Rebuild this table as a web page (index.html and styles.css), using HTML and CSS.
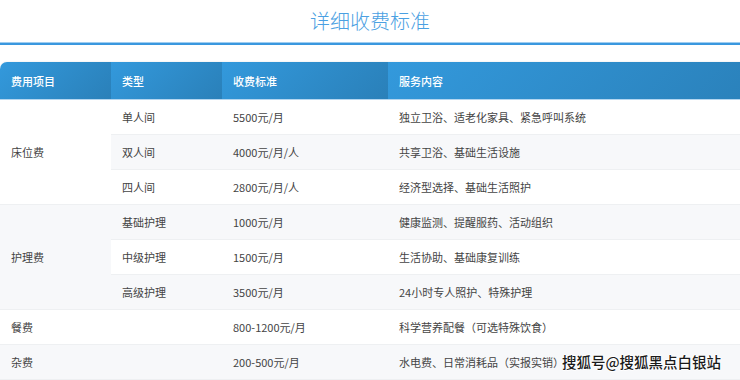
FILE: index.html
```html
<!DOCTYPE html>
<html lang="zh">
<head>
<meta charset="utf-8">
<link rel="stylesheet" href="styles.css">
</head>
<body>
<div class="page">
  <h2 class="title">详细收费标准</h2>
  <table class="fees">
    <colgroup>
      <col class="c1"><col class="c2"><col class="c3"><col class="c4">
    </colgroup>
    <thead>
      <tr><th>费用项目</th><th>类型</th><th>收费标准</th><th>服务内容</th></tr>
    </thead>
    <tbody>
      <tr><td rowspan="3" class="group">床位费</td><td>单人间</td><td>5500元/月</td><td>独立卫浴、适老化家具、紧急呼叫系统</td></tr>
      <tr><td>双人间</td><td>4000元/月/人</td><td>共享卫浴、基础生活设施</td></tr>
      <tr><td>四人间</td><td>2800元/月/人</td><td>经济型选择、基础生活照护</td></tr>
      <tr><td rowspan="3" class="group">护理费</td><td>基础护理</td><td>1000元/月</td><td>健康监测、提醒服药、活动组织</td></tr>
      <tr><td>中级护理</td><td>1500元/月</td><td>生活协助、基础康复训练</td></tr>
      <tr><td>高级护理</td><td>3500元/月</td><td>24小时专人照护、特殊护理</td></tr>
      <tr><td>餐费</td><td></td><td>800-1200元/月</td><td>科学营养配餐（可选特殊饮食）</td></tr>
      <tr><td>杂费</td><td></td><td>200-500元/月</td><td>水电费、日常消耗品（实报实销）</td></tr>
    </tbody>
  </table>
  <div class="watermark">搜狐号@搜狐黑点白银站</div>
</div>
</body>
</html>
```
FILE: styles.css
```css
html, body {
  margin: 0;
  padding: 0;
  background: #fff;
}
body {
  font-family: "Noto Sans CJK SC", "Noto Sans", sans-serif;
  color: #444;
}
.page {
  position: relative;
  width: 740px;
  height: 380px;
  overflow: hidden;
}
.title {
  margin: 0;
  padding: 8px 0 9px;
  line-height: 26px;
  font-size: 20px;
  font-weight: 300;
  text-align: center;
  color: #4aa0e2;
  border-bottom: 2px solid #3a98df;
  box-shadow: 0 -1px 0 #9fcdf0 inset;
}
.fees {
  margin: 17px 0 0 0;
  width: 770px;
  border-collapse: separate;
  border-spacing: 0;
  table-layout: fixed;
  border-radius: 7px 7px 0 0;
  overflow: hidden;
  box-shadow: 0 0 2px rgba(0,0,0,0.12);
  font-size: 11px;
}
.c1 { width: 111px; }
.c2 { width: 111px; }
.c3 { width: 166px; }
.fees th {
  height: 38px;
  padding: 0 11px;
  text-align: left;
  font-weight: 500;
  color: #fff;
  background: linear-gradient(135deg, #3399dc, #2a80b9);
  border-bottom: 1px solid #b4d6f0;
  box-sizing: border-box;
}
.fees td {
  height: 35px;
  padding: 0 11px;
  box-sizing: border-box;
  border-bottom: 1px solid #eef0f2;
  color: #444;
  white-space: nowrap;
}
.fees tbody tr:nth-child(even) td {
  background: #f7f8fa;
}
.fees tbody tr:nth-child(odd) td {
  background: #fff;
}
.watermark {
  position: absolute;
  left: 562px;
  top: 352px;
  font-size: 14.5px;
  line-height: 20px;
  font-weight: 500;
  color: #1a1a1a;
  text-shadow: 1px 0 0 #fff, -1px 0 0 #fff, 0 1px 0 #fff, 0 -1px 0 #fff;
}
```
